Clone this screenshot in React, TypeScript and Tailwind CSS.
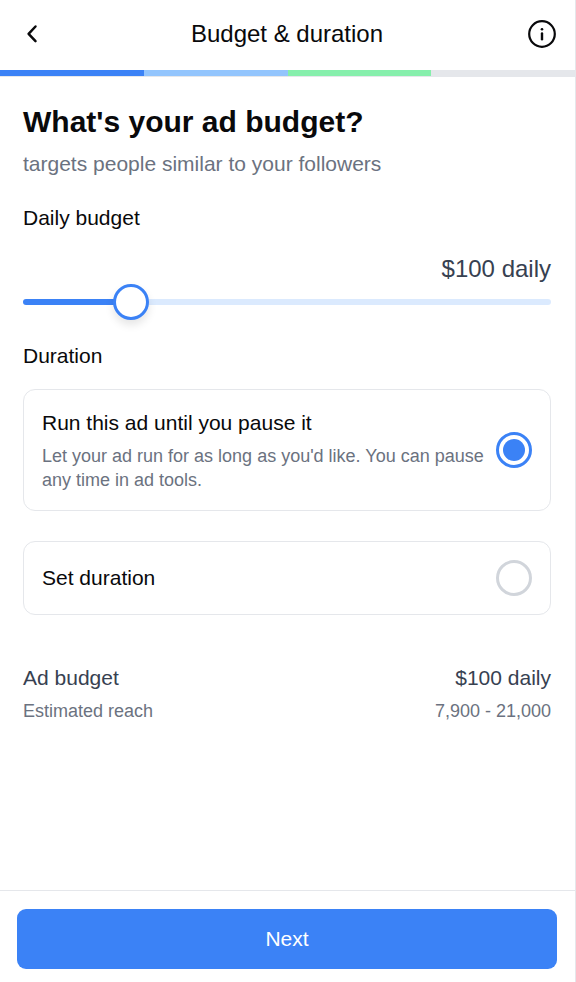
import { useState } from "react";

const MIN_BUDGET = 10;
const MAX_BUDGET = 500;

const steps = ["bg-[#3b82f6]", "bg-[#93c5fd]", "bg-[#86efac]", "bg-[#e5e7eb]"];

const durations = [
  {
    id: "until-paused",
    title: "Run this ad until you pause it",
    description:
      "Let your ad run for as long as you'd like. You can pause any time in ad tools.",
  },
  { id: "set-duration", title: "Set duration", description: "" },
];

const Header = () => {
  return (
    <header className="border-b border-[#e5e7eb]">
      <div className="flex h-[70px] items-center justify-between pb-[2px] pl-[18px] pr-[19px]">
        <button type="button" aria-label="Back" className="flex size-7 items-center justify-center">
          <svg width="28" height="28" viewBox="0 0 28 28" fill="none" stroke="currentColor" strokeWidth="2.5" strokeLinecap="round" strokeLinejoin="round">
            <path d="M17.5 6.5 10.6 13.8 17.5 21.1" />
          </svg>
        </button>
        <h1 className="text-2xl">Budget &amp; duration</h1>
        <button type="button" aria-label="About budgets" className="flex size-7 items-center justify-center">
          <svg width="28" height="28" viewBox="0 0 28 28" fill="none" stroke="currentColor">
            <circle cx="14" cy="14" r="12.8" strokeWidth="2.2" />
            <path d="M14 13.4v5.9" strokeWidth="2.4" strokeLinecap="round" />
            <circle cx="14" cy="9.2" r="1.3" fill="currentColor" stroke="none" />
          </svg>
        </button>
      </div>
      <div className="flex h-[6px]">
        {steps.map((color) => (
          <div key={color} className={`flex-1 ${color}`} />
        ))}
      </div>
    </header>
  );
};

const BudgetSlider = ({ value, onChange }: { value: number; onChange: (value: number) => void }) => {
  const fill = ((value - MIN_BUDGET) / (MAX_BUDGET - MIN_BUDGET)) * 100;

  return (
    <input
      id="daily-budget"
      type="range"
      min={MIN_BUDGET}
      max={MAX_BUDGET}
      step={10}
      value={value}
      onChange={(e) => onChange(Number(e.target.value))}
      style={{ "--fill": `${fill}%` } as React.CSSProperties}
      className="block h-9 w-full cursor-pointer appearance-none bg-transparent
      [&::-webkit-slider-runnable-track]:h-[6px] [&::-webkit-slider-runnable-track]:rounded-full
      [&::-webkit-slider-runnable-track]:bg-[linear-gradient(to_right,#3b82f6_var(--fill),#dbeafe_var(--fill))]
      [&::-webkit-slider-thumb]:-mt-[15px] [&::-webkit-slider-thumb]:size-9 [&::-webkit-slider-thumb]:appearance-none
      [&::-webkit-slider-thumb]:rounded-full [&::-webkit-slider-thumb]:border-3 [&::-webkit-slider-thumb]:border-[#3b82f6]
      [&::-webkit-slider-thumb]:bg-white [&::-webkit-slider-thumb]:shadow-[0_5px_8px_rgba(0,0,0,0.1)]"
    />
  );
};

export default function App() {
  const [budget, setBudget] = useState(100);
  const [duration, setDuration] = useState("until-paused");

  return (
    <div className="flex min-h-screen flex-col border-r border-[#e5e7eb] bg-white font-['Liberation_Sans',Arial,sans-serif] text-[#09090b]">
      <Header />

      <main className="flex-1 pb-6 pl-[23px] pr-6 pt-[27px] text-[21px] leading-[30px]">
        <h2 className="text-3xl font-bold leading-9">What's your ad budget?</h2>
        <p className="mt-[9px] text-[#6b7280]">targets people similar to your followers</p>

        <label htmlFor="daily-budget" className="mt-6 block">
          Daily budget
        </label>
        <p className="mt-[21px] text-right text-2xl leading-[30px] text-[#374151]">${budget} daily</p>
        <BudgetSlider value={budget} onChange={setBudget} />

        <fieldset className="mt-[21px]">
          <legend>Duration</legend>
          <div className="mt-[18px] flex flex-col gap-[30px]">
            {durations.map((item) => (
              <label
                key={item.id}
                className="flex cursor-pointer items-center justify-between gap-3 rounded-xl border border-[#e5e7eb] p-[18px]"
              >
                <span>
                  <span className="block">{item.title}</span>
                  {item.description && (
                    <span className="mt-[6px] block text-lg leading-6 text-[#6b7280]">{item.description}</span>
                  )}
                </span>
                <input
                  type="radio"
                  name="duration"
                  value={item.id}
                  checked={duration === item.id}
                  onChange={() => setDuration(item.id)}
                  className="size-9 shrink-0 appearance-none rounded-full border-3 border-[#d1d5db] p-1 
                  checked:border-[#3b82f6] checked:bg-[#3b82f6] checked:bg-clip-content"
                />
              </label>
            ))}
          </div>
        </fieldset>

        <dl className="mt-12">
          <div className="flex justify-between text-[#374151]">
            <dt>Ad budget</dt>
            <dd>${budget} daily</dd>
          </div>
          <div className="mt-[6px] flex justify-between text-lg leading-6 text-[#6b7280]">
            <dt>Estimated reach</dt>
            <dd>7,900 - 21,000</dd>
          </div>
        </dl>
      </main>

      <footer className="border-t border-[#e5e7eb] pb-[13px] pl-[17px] pr-[18px] pt-[18px]">
        <button type="button" className="h-[60px] w-full rounded-[9px] bg-[#3b82f6] text-[21px] text-white">
          Next
        </button>
      </footer>
    </div>
  );
}
